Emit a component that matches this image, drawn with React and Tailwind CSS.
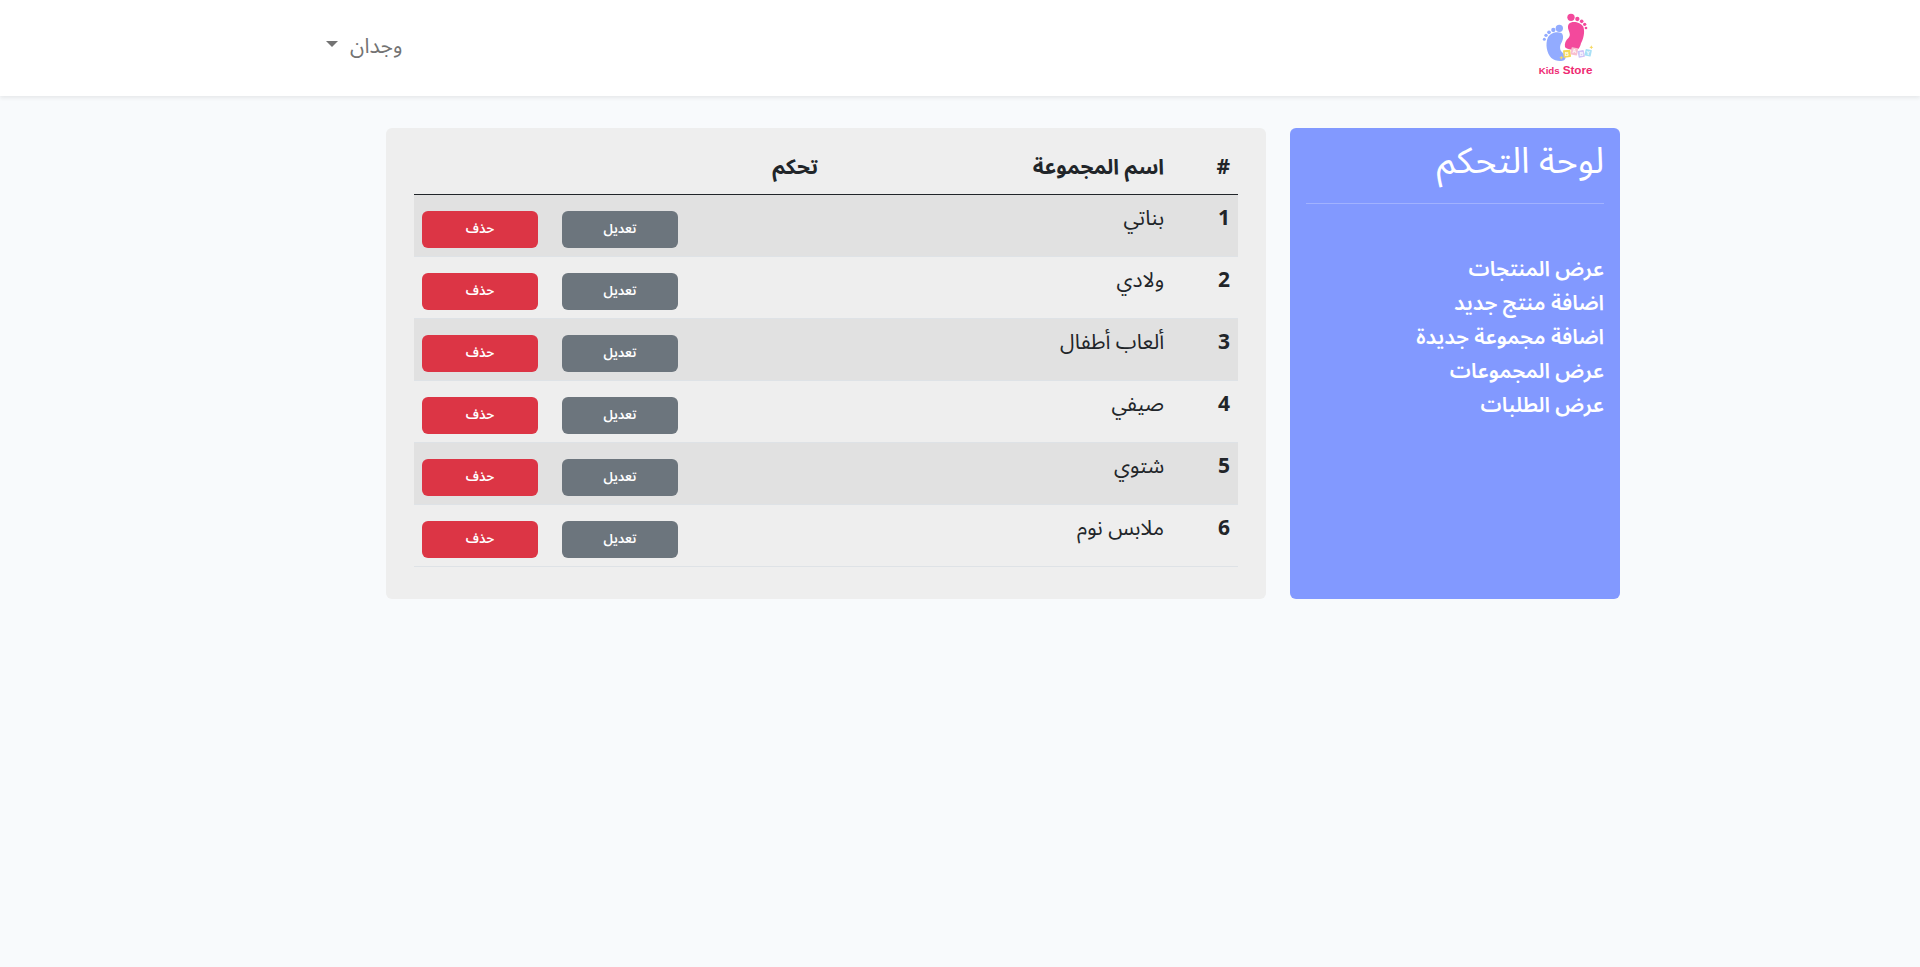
const links = [
  "عرض المنتجات",
  "اضافة منتج جديد",
  "اضافة مجموعة جديدة",
  "عرض المجموعات",
  "عرض الطلبات",
];

const groups = ["بناتي", "ولادي", "ألعاب أطفال", "صيفي", "شتوي", "ملابس نوم"];

function Logo() {
  return (
    <svg viewBox="54 36 168 204" direction="ltr" className="h-[68px] w-14" role="img" aria-label="Kids Store">
      <g fill="#92abff">
        <path d="M84 112C91 98 112 93 124 99C132 105 130 119 124 129C118 140 119 151 128 158C137 166 140 174 133 180C124 186 104 183 94 174C80 160 75 132 84 112Z" />
        <circle cx="118" cy="85" r="11" />
        <circle cx="100" cy="90" r="6.5" />
        <circle cx="87" cy="97" r="5.5" />
        <circle cx="78" cy="106" r="5" />
        <circle cx="73" cy="118" r="4.5" />
      </g>
      <g fill="#f3499c">
        <path d="M147 71C156 61 182 66 190 80C196 98 189 118 183 130C180 143 176 148 168 150C158 151 142 148 135 142C133 130 137 120 146 113C152 107 149 99 146 91C143 83 143 76 147 71Z" />
        <circle cx="153" cy="52" r="11" />
        <circle cx="172" cy="57" r="6.5" />
        <circle cx="185" cy="64" r="5.5" />
        <circle cx="194" cy="73" r="5" />
        <circle cx="198" cy="84" r="4" />
      </g>
      <g fontFamily="Liberation Sans" fontWeight="700" fontSize="16" fill="#ffffff" textAnchor="middle">
        <rect x="130" y="150" width="22" height="22" rx="2" fill="#f4d958" transform="rotate(-6 141 161)" />
        <text x="141" y="167">B</text>
        <rect x="153" y="143" width="20" height="22" rx="2" fill="#f8bfd0" transform="rotate(10 163 154)" />
        <text x="163" y="160">A</text>
        <rect x="174" y="151" width="19" height="21" rx="2" fill="#cfc3f7" transform="rotate(-12 184 161)" />
        <text x="184" y="167">B</text>
        <rect x="195" y="148" width="19" height="20" rx="2" fill="#a8e0f6" transform="rotate(12 204 158)" />
        <text x="204" y="164">Y</text>
      </g>
      <path fill="#f6d860" d="M214 136L216 140L220 142L216 144L214 148L212 144L208 142L212 140Z M124 167L126 171L130 173L126 175L124 179L122 175L118 173L122 171Z" />
      <g fontFamily="Liberation Sans" fontWeight="700" fill="#ee2a72">
        <text x="56" y="222" fontSize="29">Kids</text>
        <text x="128" y="222" fontSize="35">Store</text>
      </g>
    </svg>
  );
}

export default function App() {
  return (
    <div
      dir="rtl"
      className="min-h-screen bg-[#f8fafc] font-['Noto_Sans_Arabic','Noto_Sans','DejaVu_Sans',sans-serif] text-[#212529]"
    >
      <header className="bg-white pb-1 shadow-[0_2px_4px_rgba(0,0,0,0.075)]">
        <nav className="mx-auto flex h-[92px] max-w-[1320px] items-center justify-between px-[26px]">
          <a href="#">
            <Logo />
          </a>
          <button type="button" className="flex items-center gap-3 text-[21px] leading-[30px] text-[#737373]">
            وجدان
            <svg viewBox="0 0 12 6" className="mb-1 h-1.5 w-3 fill-current" aria-hidden="true">
              <path d="M0 0H12L6 6Z" />
            </svg>
          </button>
        </nav>
      </header>

      <main className="mx-auto flex max-w-[1320px] gap-6 py-8">
        <aside className="w-1/4 rounded-md bg-[#8299ff] px-4 text-white">
          <h1 className="flex h-[76px] items-center border-b border-white/25 pb-2 text-4xl">لوحة التحكم</h1>
          <ul className="pt-12 text-[21px] font-semibold">
            {links.map((label) => (
              <li key={label} className="flex">
                <a href="#" className="leading-[34px]">
                  {label}
                </a>
              </li>
            ))}
          </ul>
        </aside>

        <section className="w-2/3 rounded-md bg-[#eeeeee] px-7 pt-3 pb-8">
          <table className="w-full table-fixed border-collapse text-right text-[21px] leading-[30px]">
            <thead>
              <tr className="h-[54px] border-b border-[#212529]">
                <th className="w-[8%] px-2 font-bold">#</th>
                <th className="w-[42%] px-2 font-bold">اسم المجموعة</th>
                <th className="px-2 font-bold">تحكم</th>
              </tr>
            </thead>
            <tbody>
              {groups.map((name, i) => (
                <tr key={name} className="border-b border-[#dee2e6] align-top odd:bg-[#e1e1e1]">
                  <th scope="row" className="px-2 pt-2 font-bold">{i + 1}</th>
                  <td className="px-2 pt-2">{name}</td>
                  <td className="px-2 pt-4 pb-2">
                    <div className="flex justify-end gap-6 text-[13px] font-semibold text-white">
                      <button type="button" className="h-[37px] w-[116px] rounded-md bg-[#6c757d]">
                        تعديل
                      </button>
                      <button type="button" className="h-[37px] w-[116px] rounded-md bg-[#dc3545]">
                        حذف
                      </button>
                    </div>
                  </td>
                </tr>
              ))}
            </tbody>
          </table>
        </section>
      </main>
    </div>
  );
}
